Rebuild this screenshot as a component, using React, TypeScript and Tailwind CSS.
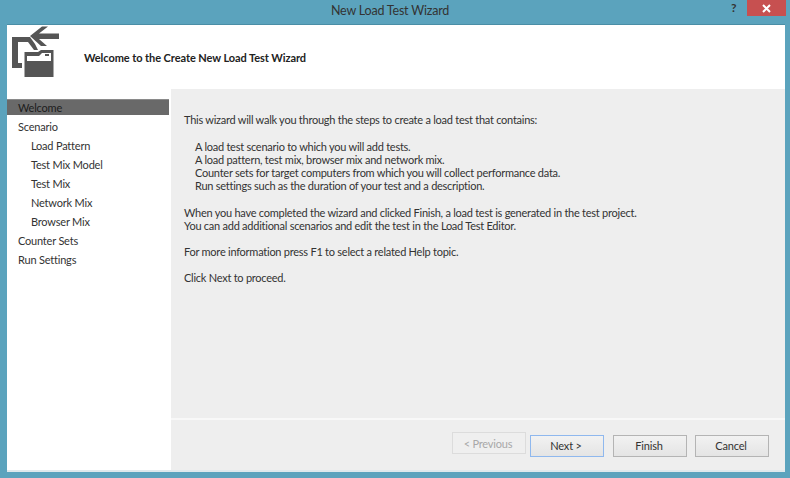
const font = { fontFamily: 'Lato, "Open Sans", sans-serif' }

const navItems = [
    { label: "Welcome", sub: false, active: true },
    { label: "Scenario", sub: false },
    { label: "Load Pattern", sub: true },
    { label: "Test Mix Model", sub: true },
    { label: "Test Mix", sub: true },
    { label: "Network Mix", sub: true },
    { label: "Browser Mix", sub: true },
    { label: "Counter Sets", sub: false },
    { label: "Run Settings", sub: false },
]

function WizardIcon() {
    return (
        <svg width="50" height="54" viewBox="11 26 50 54" className="shrink-0">
            <path d="M30 36 L42 26.5 L48 26.5 L39 33.5 L59 33.5 L59 39 L39 39 L47 46 L41 46 Z" fill="#555" />
            <path d="M12 37 L30 37 L35 44 L38 50 L34 50 L28 42 L18 42 L18 63 L22 63 L22 68 L12 68 Z" fill="#555" />
            <path d="M24.5 52 L38 52 L41 50 L53.5 50 L53.5 77 L24.5 77 Z" fill="#555" />
            <path d="M27 56 L39 56 L42 53 L51 53 L51 61 L27 61 Z" fill="#fff" />
            <rect x="45" y="54" width="4" height="2" fill="#555" />
        </svg>
    )
}

function WizardButton({ label, variant }: { label: string; variant?: "disabled" | "primary" }) {
    let cls = "border-[#b4b4b4] text-[#333] bg-gradient-to-b from-[#f2f2f2] to-[#e4e4e4]"
    if (variant === "disabled") cls = "border-[#dcdcdc] text-[#a8a8a8] bg-[#efefef]"
    if (variant === "primary") cls = "border-[#8fb8ee] text-[#333] bg-gradient-to-b from-[#f2f2f2] to-[#e4e4e4]"
    return (
        <button className={`w-[74px] h-[22px] pr-[2px] border text-[11px] tracking-[-0.2px] leading-none ${cls}`}>{label}</button>
    )
}

export default function App() {
    return (
        <div className="w-[790px] h-[478px] bg-[#5ba3bd] flex flex-col overflow-hidden text-[#333]" style={font}>
            <div className="h-[24px] shrink-0 flex items-start relative">
                <div className="flex-1 text-center text-[12.5px] tracking-[-0.2px] leading-[21px] text-[#333] pr-[10px]">New Load Test Wizard</div>
                <span className="absolute left-[731px] top-0 text-[12px] font-bold leading-[15px] text-[#333]">?</span>
                <div className="absolute left-[747px] top-0 w-[39px] h-[16px] bg-[#c75050] flex items-center justify-center">
                    <svg width="9" height="9" viewBox="0 0 9 9">
                        <path d="M1 1 L8 8 M8 1 L1 8" stroke="#fff" strokeWidth="2" />
                    </svg>
                </div>
            </div>
            <div className="ml-[7px] mr-[5px] mb-[6px] flex-1 flex flex-col bg-white border-t border-[#4a8ea6] border-b-2 border-b-[#dfe9ec]">
                <div className="h-[64px] shrink-0 flex items-start pl-[4px] pt-[1px]">
                    <WizardIcon />
                    <h1 className="ml-[23px] mt-[24px] text-[11px] font-bold tracking-[-0.07px] leading-[16px] text-[#222]">
                        Welcome to the Create New Load Test Wizard
                    </h1>
                </div>
                <div className="flex-1 flex">
                    <nav className="w-[164px] shrink-0 pt-[10px] text-[11px] tracking-[-0.2px]">
                        {navItems.map((item) => (
                            <div
                                key={item.label}
                                className={`w-[162px] ${item.sub ? "pl-[24px]" : "pl-[11px]"} ${item.active ? "bg-[#696969] h-[16px] mb-[3px] leading-[16px] text-[#1c1c1c] border-t border-[#8a8a8a]" : "h-[19px] leading-[18px]"}`}
                            >
                                {item.label}
                            </div>
                        ))}
                    </nav>
                    <main className="flex-1 bg-[#eeeeee] flex flex-col">
                        <div className="h-[329px] shrink-0 pl-[13px] pt-[24px] text-[11px] tracking-[-0.25px] leading-[13px] text-[#333]">
                            <p>This wizard will walk you through the steps to create a load test that contains:</p>
                            <ul className="mt-[14px] pl-[11px]">
                                <li>A load test scenario to which you will add tests.</li>
                                <li>A load pattern, test mix, browser mix and network mix.</li>
                                <li>Counter sets for target computers from which you will collect performance data.</li>
                                <li>Run settings such as the duration of your test and a description.</li>
                            </ul>
                            <p className="mt-[14px]">When you have completed the wizard and clicked Finish, a load test is generated in the test project.</p>
                            <p>You can add additional scenarios and edit the test in the Load Test Editor.</p>
                            <p className="mt-[13px]">For more information press F1 to select a related Help topic.</p>
                            <p className="mt-[13px]">Click Next to proceed.</p>
                        </div>
                        <div className="h-[2px] bg-[#f8f8f8] shrink-0" />
                        <div className="flex justify-end pt-[12px] pr-[16px]">
                            <WizardButton label="< Previous" variant="disabled" />
                            <div className="ml-[4px]"><WizardButton label="Next >" variant="primary" /></div>
                            <div className="ml-[9px]"><WizardButton label="Finish" /></div>
                            <div className="ml-[8px]"><WizardButton label="Cancel" /></div>
                        </div>
                    </main>
                </div>
            </div>
        </div>
    )
}
